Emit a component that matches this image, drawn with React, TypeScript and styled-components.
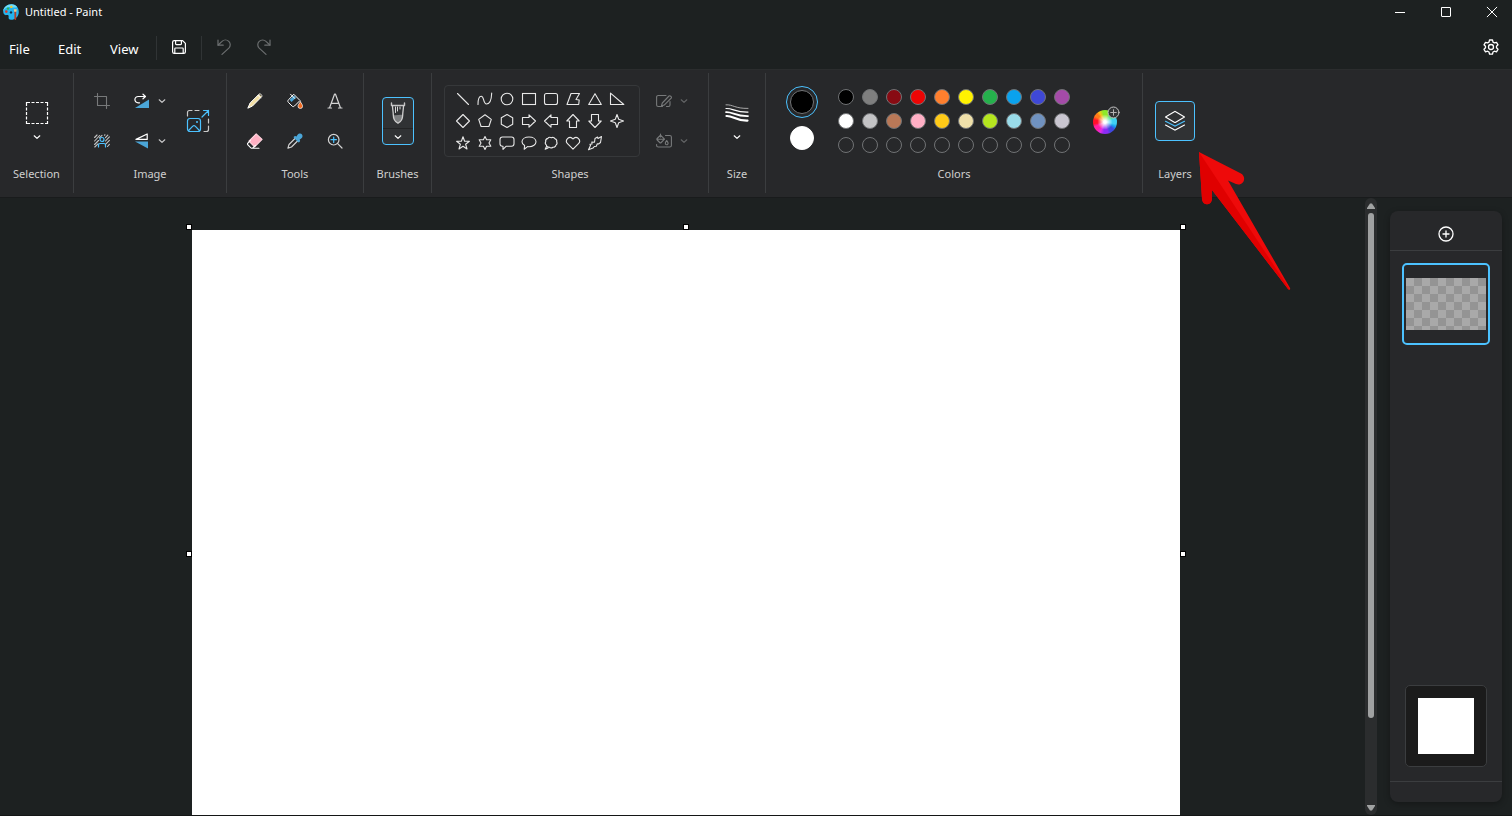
import React from "react";
import styled, { createGlobalStyle, css } from "styled-components";

const accent = "#4cc2ff";
const line = "#3b3d3f";

const GlobalStyle = createGlobalStyle`
  *, *::before, *::after { box-sizing: border-box; }
  html, body { margin: 0; padding: 0; background: #1d2121; }
  body, button { font-family: "Noto Sans", "Open Sans", sans-serif; }
  button { border: 0; padding: 0; margin: 0; background: transparent; color: inherit; cursor: pointer; }
  svg { display: block; flex: none; }
`;

const Window = styled.div`
  display: flex;
  flex-direction: column;
  height: 100vh;
  overflow: hidden;
  color: #ffffff;
  background: #1d2121;
`;

const TitleBar = styled.header`
  display: flex;
  align-items: center;
  justify-content: space-between;
  height: 24px;
  padding-left: 3px;
`;

const TitleText = styled.h1`
  display: flex;
  align-items: center;
  gap: 6px;
  margin: 0;
  font-size: 11px;
  line-height: 16px;
  font-weight: 400;
`;

const CaptionButtons = styled.div`
  display: flex;
  gap: 6px;
`;

const CaptionButton = styled.button`
  display: grid;
  place-items: center;
  width: 40px;
  height: 24px;
`;

const MenuBar = styled.nav`
  display: flex;
  align-items: center;
  height: 45px;
  padding: 2px 9px 0 0;
`;

const MenuItem = styled.button<{ $width: number }>`
  width: ${(p) => p.$width}px;
  height: 32px;
  padding: 2px 0 0 9px;
  text-align: left;
  font-size: 13px;
  line-height: 20px;
`;

const MenuRule = styled.span`
  width: 1px;
  height: 24px;
  background: #303435;
`;

const MenuIcon = styled.button<{ $width?: number }>`
  display: grid;
  place-items: center;
  width: ${(p) => p.$width ?? 40}px;
  height: 32px;
  padding-bottom: 2px;

  &:disabled { color: #6c6f70; }
`;

const Spacer = styled.span`
  flex: 1;
`;

const Ribbon = styled.section`
  display: flex;
  flex: none;
  padding: 4px 0;
  background: #27282a;
  box-shadow: 0 1px 0 #191b1c, inset 0 1px 0 #2b2d2e;
`;

const GroupBox = styled.section<{ $width: number; $last?: boolean }>`
  position: relative;
  display: flex;
  flex-direction: column;
  flex: none;
  align-items: center;
  width: ${(p) => p.$width}px;
  padding: 8px 0 11px;
  border-right: 1px solid ${(p) => (p.$last ? "transparent" : line)};
`;

const GroupBody = styled.div<{ $gap?: number; $indent?: number }>`
  display: flex;
  align-items: center;
  gap: ${(p) => p.$gap ?? 0}px;
  height: 80px;
  padding-left: ${(p) => p.$indent ?? 0}px;
`;

const GroupLabel = styled.h2`
  margin: 5px 0 0;
  font-size: 11px;
  line-height: 16px;
  font-weight: 400;
  color: #cfcfcf;
  white-space: nowrap;
`;

const ToolGrid = styled.div<{ $columns: string }>`
  display: grid;
  grid-template-columns: ${(p) => p.$columns};
  grid-auto-rows: 40px;
`;

const ToolButton = styled.button<{ $active?: boolean }>`
  display: grid;
  place-items: center;
  width: 40px;
  height: 40px;

  &:disabled { color: #77797a; }

  ${(p) =>
    p.$active &&
    css`
      border: 1px solid ${accent};
      border-radius: 4px;
      background: #303234;
    `}
`;

const SplitButton = styled.button`
  display: flex;
  align-items: center;
  gap: 8px;
  width: 56px;
  height: 40px;
  padding: 0 12px;

  svg:last-child { opacity: 0.75; }
  &:disabled { color: #77797a; }
`;

const StackButton = styled.button`
  display: flex;
  flex-direction: column;
  align-items: center;
  gap: 8px;
  width: 40px;
`;

const BrushButton = styled.div`
  display: flex;
  flex-direction: column;
  width: 32px;
  height: 48px;
  border: 1px solid ${accent};
  border-radius: 4px;
  background: #303234;
`;

const BrushPart = styled.button<{ $height: number }>`
  display: grid;
  place-items: center;
  height: ${(p) => p.$height}px;

  & + & { border-top: 1px solid #232425; }
`;

const ShapeGallery = styled.div`
  display: grid;
  grid-template-columns: repeat(8, 22px);
  grid-auto-rows: 22px;
  width: 196px;
  padding: 2px 7px;
  border: 1px solid #36383a;
  border-radius: 4px;
`;

const ShapeButton = styled.button`
  display: grid;
  place-items: center;
  color: #e8e8e8;
`;

const ActiveColors = styled.div`
  display: flex;
  flex-direction: column;
  gap: 4px;
  margin: 0 16px 2px 0;
`;

const ActiveColor = styled.button<{ $color: string; $selected?: boolean }>`
  display: grid;
  place-items: center;
  width: 32px;
  height: 32px;
  border: ${(p) => (p.$selected ? `1px solid ${accent}` : "0")};
  border-radius: 50%;

  &::after {
    content: "";
    width: 24px;
    height: 24px;
    border-radius: 50%;
    border: 1px solid ${(p) => (p.$selected ? "#737577" : "#ffffff")};
    background: ${(p) => p.$color};
  }
`;

const Palette = styled.div`
  display: grid;
  grid-template-columns: repeat(10, 24px);
  grid-auto-rows: 24px;
  margin-right: 12px;
`;

const Swatch = styled.button<{ $color: string }>`
  display: grid;
  place-items: center;

  &::after {
    content: "";
    width: 16px;
    height: 16px;
    border-radius: 50%;
    border: 1px solid #707274;
    background: ${(p) => p.$color};
  }
`;

const WheelButton = styled.button`
  position: relative;
  width: 40px;
  height: 40px;

  svg {
    position: absolute;
    top: 5px;
    right: 6px;
  }
`;

const Wheel = styled.span`
  display: block;
  width: 24px;
  height: 24px;
  margin: 2px 0 0 7px;
  border-radius: 50%;
  background:
    radial-gradient(circle, #ffffff 0 8%, rgba(255, 255, 255, 0) 45%),
    conic-gradient(
      #8ee82a 0deg 20deg, #3fe07a 40deg 55deg, #3fd0f5 75deg 100deg, #1a9bf0 115deg,
      #4048e0 130deg 150deg, #8a2cf5 165deg 185deg, #e02ce8 205deg, #ff1fa0 225deg 245deg,
      #ff1028 262deg 280deg, #ff7a1a 300deg 315deg, #f5c518 330deg, #8ee82a 350deg
    );
`;

const Pointer = styled.svg`
  position: absolute;
  left: 52px;
  top: 76px;
  z-index: 2;
  pointer-events: none;
`;

const Workspace = styled.main`
  display: flex;
  flex: 1;
  min-height: 0;
  padding-top: 1px;
  border-bottom: 1px solid #141616;
`;

const Viewport = styled.div`
  display: flex;
  flex: 1;
  justify-content: center;
  align-items: flex-start;
  min-width: 0;
  padding: 29px 0 0 7px;
  overflow: hidden;
`;

const Frame = styled.div`
  position: relative;
  flex: none;
  padding: 3px;
`;

const Paper = styled.div`
  width: 988px;
  height: 648px;
  background: #ffffff;
`;

const Handle = styled.span<{ $x: number; $y: number }>`
  position: absolute;
  left: ${(p) => p.$x}%;
  top: ${(p) => p.$y}%;
  width: 6px;
  height: 6px;
  margin: -3px 0 0 -3px;
  border: 1px solid #000000;
  background: #ffffff;
`;

const ScrollBar = styled.div`
  display: flex;
  flex-direction: column;
  width: 12px;
  border-radius: 6px;
  background: #2b2d2e;
`;

const ScrollArrow = styled.button`
  display: grid;
  place-items: center;
  height: 15px;
  color: #a0a2a2;
`;

const ScrollTrack = styled.div`
  flex: 1;
  padding: 0 3px;
`;

const ScrollThumb = styled.div`
  height: 86%;
  border-radius: 3px;
  background: #9fa1a1;
`;

const LayerPanel = styled.aside`
  display: flex;
  flex-direction: column;
  align-items: center;
  width: 112px;
  margin: 13px 10px 13px 13px;
  border-radius: 8px;
  background: #27282a;
  box-shadow: 0 2px 6px rgba(0, 0, 0, 0.3);
`;

const LayerHeader = styled.div`
  display: grid;
  place-items: center;
  width: 100%;
  height: 40px;
  padding-top: 7px;
  border-bottom: 1px solid ${line};
`;

const LayerCard = styled.button`
  display: grid;
  place-items: center;
  width: 88px;
  height: 82px;
  margin-top: 12px;
  border: 2px solid ${accent};
  border-radius: 5px;
`;

const Checker = styled.span`
  width: 80px;
  height: 52px;
  background: repeating-conic-gradient(#949494 0 25%, #a9a9a9 0 50%) 0 0 / 16px 16px;
`;

const BackgroundCard = styled.button`
  display: grid;
  place-items: center;
  width: 82px;
  height: 82px;
  margin: auto 0 14px;
  border: 1px solid ${line};
  border-radius: 5px;
  background: #1b1b1b;
`;

const BackgroundFill = styled.span`
  width: 56px;
  height: 56px;
  background: #ffffff;
`;

const LayerFooter = styled.div`
  width: 100%;
  height: 21px;
  border-top: 1px solid ${line};
`;

type IconProps = { size?: number; box?: number; width?: number; children: React.ReactNode };

const Icon = ({ size = 16, box = 16, width = 1, children }: IconProps) => (
  <svg
    width={size}
    height={size}
    viewBox={`0 0 ${box} ${box}`}
    fill="none"
    stroke="currentColor"
    strokeWidth={width}
    strokeLinecap="round"
    strokeLinejoin="round"
    aria-hidden="true"
  >
    {children}
  </svg>
);

const Chevron = () => (
  <Icon size={8} box={8} width={1.2}>
    <path d="M1.2 2.8 4 5.4 6.8 2.8" />
  </Icon>
);

const PaintLogo = () => (
  <Icon>
    <path
      d="M8.6.3C4 .3.2 3.6.2 7.6c0 2.7 1.7 3.9 3.4 3.5 1.5-.4 2.300.3 2 1.700-.4 1.700.6 3 2.400 3 4.300 0 7.800-3.400 7.800-7.800C15.800 3.500 12.700.3 8.600.3Z"
      fill="#25b4ee"
      stroke="none"
    />
    <path d="M8.6.3C4 .3.5 3.3.2 7.2 2 3.5 5 2.6 8.5 3.2c3 .5 5 .2 5.6-.3C12.7 1.2 10.8.3 8.6.3Z" fill="#6fdcf7" stroke="none" />
    <circle cx="3.3" cy="7.6" r="1.3" fill="#d93b2b" stroke="none" />
    <circle cx="5" cy="4.6" r="1.2" fill="#35b44a" stroke="none" />
    <circle cx="8.3" cy="2.9" r="1.2" fill="#f2c72e" stroke="none" />
    <circle cx="8" cy="8.4" r="1.2" fill="#10334d" stroke="none" />
    <path d="M12.3 8v7" stroke="#b5402b" strokeWidth="1.8" />
    <path d="M10.8 5.2h3l-.4 2.600h-2.200Z" fill="#f0c987" stroke="none" />
  </Icon>
);

const SaveIcon = () => (
  <Icon width={1.2}>
    <path d="M1.6 3.2c0-.9.7-1.6 1.6-1.6h8.4l2.8 2.8v8.4c0 .9-.7 1.6-1.6 1.6H3.2c-.9 0-1.6-.7-1.6-1.6Z" />
    <path d="M4.6 1.800v3c0 .5.3.8.8.8h4.200c.5 0 .8-.3.8-.8v-3M3.800 14.200V9.800c0-.5.3-.8.8-.8h6.800c.5 0 .8.3.8.8v4.400" />
  </Icon>
);

const UndoIcon = () => (
  <Icon width={1.2}>
    <path d="M2 1v5.200h5.200" />
    <path d="M2.200 6 6 2.400c1.900-1.900 4.900-1.900 6.800 0s1.900 4.800 0 6.700L6 15.400" />
  </Icon>
);

const RedoIcon = () => (
  <Icon width={1.2}>
    <path d="M14 1v5.200H8.800" />
    <path d="M13.800 6 10 2.400c-1.900-1.900-4.900-1.900-6.800 0s-1.900 4.800 0 6.700l6.800 6.300" />
  </Icon>
);

const GearIcon = () => (
  <Icon width={1.3}>
    <path d="M6.500 1h3l.5 2.100 1.400.8 2.100-.6L15 5.800l-1.500 1.500v1.500L15 10.300l-1.500 2.500-2.100-.6-1.400.8-.5 2.100h-3L6 13l-1.400-.8-2.100.6L1 10.300l1.500-1.500V7.300L1 5.800l1.500-2.500 2.100.6L6 3.100Z" />
    <circle cx="8" cy="8" r="2.5" />
  </Icon>
);

const SelectIcon = () => (
  <Icon size={24} box={24}>
    <g strokeLinecap="butt" strokeWidth="1.2">
      <path d="M1 1.500h4m1.500 0h3m1.500 0h3m1.500 0h3m1.500 0h3M1 22.500h4m1.500 0h3m1.500 0h3m1.500 0h3m1.500 0h3" />
      <path d="M1.500 1v4m0 1.500v3m0 1.500v3m0 1.500v3m0 1.500v3M22.500 1v4m0 1.500v3m0 1.500v3m0 1.500v3m0 1.500v3" />
    </g>
  </Icon>
);

const CropIcon = () => (
  <Icon width={1.1}>
    <path d="M3.500.5v12h12M.5 3.500h12v12" />
  </Icon>
);

const RemoveBackgroundIcon = () => (
  <Icon>
    <path
      d="M.6 4.500 3 2M.6 8 5.600 2.500M.6 11.500 4.500 7.500M.8 14 4 10.800M5.500 4.800 8 2.300M10.500 2.200l.5-.4M11.500 4.700l2.300-2.500M11.500 8 15.400 3.800M11.500 11.300l3.900-4M13.500 13.500l1.900-2.200"
      stroke="#c4c4c4"
      strokeWidth="1.1"
    />
    <circle cx="8" cy="6.5" r="2" stroke={accent} strokeWidth="1.2" />
    <path d="M4.500 14v-2c0-1 .6-1.500 1.500-1.500h4c.9 0 1.500.5 1.500 1.500v2" stroke={accent} strokeWidth="1.2" />
  </Icon>
);

const RotateIcon = () => (
  <Icon width={1.2}>
    <path d="M5.500 9.800H4.200C2.300 9.800.9 8.300.9 6.600s1.400-3.100 3.300-3.100h7.300M9 1.200l2.500 2.300L9 5.800" />
    <path d="M15 6.500V15H1Z" fill="#4ba6d8" stroke="none" />
  </Icon>
);

const FlipIcon = () => (
  <Icon width={1.2}>
    <path d="M13.200 1v5.400H2Z" />
    <path d="M1 8.500h13v7Z" fill="#4ba6d8" stroke="none" />
  </Icon>
);

const ResizeIcon = () => (
  <Icon size={24} box={24} width={1.2}>
    <path d="M1.500 7V3.500c0-1.200.6-2 2-2H6M9 1.500h4M22.500 10v4M22.500 17v3.500c0 1.200-.8 2-2 2H18" stroke="#c9c9c9" />
    <rect x="1.5" y="9.5" width="13" height="13" rx="2.5" stroke={accent} />
    <path d="m2.600 21.500 4.200-4.300c.7-.7 1.700-.7 2.400 0l4.200 4.300M16 8l6.500-6.500M17.500 1.500h5v5" stroke={accent} />
    <circle cx="11" cy="13" r="1" fill={accent} stroke="none" />
  </Icon>
);

const PencilIcon = () => (
  <Icon>
    <path d="M12 1.200c1.200-1.200 3.800 1.200 2.600 2.600L5.500 13 .8 15.200 3 10.300Z" fill="#f3e0a5" />
    <path d="m11 2.300 2.600 2.600" />
    <path d="M12.300 1.400c1-.7 2.900 1.200 2.100 2.200Z" fill="#27282a" stroke="none" />
  </Icon>
);

const FillIcon = () => (
  <Icon>
    <path d="m7 1.500 6 6-5.500 5.500c-.8.8-1.700.8-2.500 0L1.400 9.400c-.8-.8-.8-1.700 0-2.500Z" />
    <path d="m2.500 6.800 4.500-4.300 2 2L4.600 9Z" fill="#4ba6d8" stroke="none" />
    <path d="m3.500 1.200 4.300 4.300" />
    <path d="M13.400 8.800c1.200 1.800 2.200 3.200 2.200 4.400a2.300 2.300 0 0 1-4.600 0c0-1.200 1.200-2.600 2.400-4.400Z" fill="#f26b21" strokeWidth=".7" />
  </Icon>
);

const TextIcon = () => (
  <Icon width={1.2}>
    <path d="M2.500 15 7.500 1.200h1L13.500 15M4.200 10.300h7.600M1 15h3.500M11.500 15H15" stroke="#d4d4d4" />
  </Icon>
);

const EraserIcon = () => (
  <Icon width={1.1}>
    <path d="m9.200.9 5.900 5.400-7.500 7.500-5.700-5.600Z" fill="#ffb0c3" stroke="#ffd5de" />
    <path d="M3.300 7.700.9 10.200c-.5.5-.5 1.200 0 1.700l2.700 2.700c.4.4 1 .7 1.600.7H12M5.500 15.200l3-2.800" />
  </Icon>
);

const DropperIcon = () => (
  <Icon width={1.1}>
    <path d="m8 5.500-6 6L.9 15.100 4.500 14l6-6" stroke="#d4d4d4" />
    <path d="M7 3.500c1-1 1.800-.6 2.500-.1.7-1.300 1.800-2.700 3-2.900 2.100-.3 3.300 1.300 3 3-.2 1.200-1.600 2.300-2.900 3 .5.7.9 1.500-.1 2.500-.5.5-1 .5-1.500 0L7 5c-.5-.5-.5-1 0-1.500Z" fill="#4ba6d8" stroke="none" />
  </Icon>
);

const ZoomIcon = () => (
  <Icon width={1.2}>
    <circle cx="6.7" cy="6.7" r="5.3" stroke="#d4d4d4" />
    <path d="m10.700 10.700 4.300 4.300" stroke="#d4d4d4" />
    <path d="M6.700 4v5.400M4 6.700h5.400" stroke={accent} />
  </Icon>
);

const BrushIcon = () => (
  <Icon size={24} box={24}>
    <path d="M7.500 14c3 1.200 6-1 9 0 0 3.500-2.500 7-4.500 8.300-2-1.300-4.500-4.800-4.500-8.300Z" fill="#7d7f80" stroke="none" />
    <path d="M5.500 2v2.500h13V2" stroke="#c4c4c4" strokeWidth="1.4" />
    <path d="M6.500 5c0 3 .8 6 .8 9 0 4 2.700 7.200 4.700 8.300 2-1.100 4.700-4.300 4.700-8.300 0-3 .8-6 .8-9" stroke="#cfcfcf" strokeWidth="1.3" />
    <path d="M9.500 6v5.500M11.500 6v4M14 6v2" stroke="#d8d8d8" />
  </Icon>
);

const OutlineIcon = () => (
  <Icon width={1.1}>
    <path d="M10 2.500H2.300C1.300 2.500.6 3.100.6 4v8c0 .9.7 1.500 1.700 1.500h4.200M14 8.500v3.500c0 .9-.6 1.500-1.500 1.500h-2" />
    <path d="M13 3c.9-.9 3.100.9 2.200 2.100l-7 7L5.500 13l.8-3Z" />
  </Icon>
);

const ShapeFillIcon = () => (
  <Icon width={1.1}>
    <path d="M9.500 2.500h4.200c1 0 1.700.6 1.700 1.500v8.500c0 .9-.7 1.500-1.700 1.500H2.300c-1 0-1.700-.6-1.700-1.500v-1" />
    <path d="m4.500 2.200 4 4-3.300 3.300c-.5.5-1 .5-1.500 0L1.200 7c-.5-.5-.5-1 0-1.500ZM4.500 1v3M1 6.200h7.500" />
    <path d="M10.700 7.500c.8 1.200 1.400 2 1.400 2.800a1.400 1.400 0 0 1-2.800 0c0-.8.6-1.600 1.400-2.800Z" />
  </Icon>
);

const SizeIcon = () => (
  <Icon size={24} box={24}>
    <path d="M1 3.800c7-.4 9 3.900 22 3.600" strokeWidth=".9" stroke="#b5b5b5" />
    <path d="M1 7.500c7-.4 9 3.900 22 3.600" strokeWidth="1.2" />
    <path d="M1 11.100c7-.4 9 4.300 22 4" strokeWidth="1.7" />
    <path d="M1.500 15c7-.4 8.500 4.900 21 4.600" strokeWidth="2.2" />
  </Icon>
);

const LayersIcon = () => (
  <Icon size={24} box={24} width={1.1}>
    <path d="M11.300 2.700c.4-.3 1-.3 1.400 0L21.500 8l-8.800 5.200c-.4.3-1 .3-1.400 0L2.500 8Z" />
    <path d="m2.500 12.200 8.800 4.600c.4.3 1 .3 1.400 0l8.800-4.600" stroke={accent} />
    <path d="m2.500 16 8.800 4.800c.4.3 1 .3 1.400 0l8.800-4.800" />
  </Icon>
);

const shapes: [string, React.ReactNode][] = [
  ["Line", <path d="m2.500 2.500 11 11" />],
  ["Curve", <path d="M1 13.500C1 9 2.200 5.300 4.200 5.300c3.100 0 1.800 7.700 5.300 7.700C12.800 13 14.500 8 14.700 2" />],
  ["Oval", <circle cx="8" cy="8" r="5.8" />],
  ["Rectangle", <rect x="1.5" y="2.5" width="13" height="11" strokeLinejoin="miter" />],
  ["Rounded rectangle", <rect x="1.5" y="2.5" width="13" height="11" rx="2" />],
  ["Polygon", <path d="M6 2.500h8.500L11 8.500l3.200.5-.5 4.500H2Z" />],
  ["Triangle", <path d="m8 2.700 6.300 10.800H1.700Z" />],
  ["Right triangle", <path d="M1.500 2.200v11.300h13.300Z" />],
  ["Diamond", <path d="M8 1.500 14.500 8 8 14.500 1.500 8Z" />],
  ["Pentagon", <path d="m8 1.800 6.300 4.600-2.400 7.100H4.100L1.700 6.400Z" />],
  ["Hexagon", <path d="m8 1.500 5.700 3.200v6.600L8 14.500l-5.700-3.200V4.700Z" />],
  ["Right arrow", <path d="M1.500 4.500H8V1.800L14.500 8 8 14.200v-2.700H1.500Z" />],
  ["Left arrow", <path d="M14.500 4.500H8V1.800L1.500 8 8 14.200v-2.700h6.500Z" />],
  ["Up arrow", <path d="M4.500 14.500V8H1.800L8 1.500 14.200 8h-2.700v6.500Z" />],
  ["Down arrow", <path d="M4.500 1.500V8H1.800L8 14.500 14.200 8h-2.700V1.500Z" />],
  ["Four-point star", <path d="m8 1.500 1.700 4.800L14.500 8 9.700 9.700 8 14.500 6.300 9.700 1.500 8l4.800-1.700Z" />],
  ["Five-point star", <path d="m8 1.700 1.600 4.600h4.800l-3.800 2.900 1.400 4.800L8 11.200 4 14l1.400-4.800-3.800-2.900h4.800Z" />],
  ["Six-point star", <path d="m8 1.500 1.600 3.300h4.200L12 8l1.800 3.200H9.600L8 14.500l-1.600-3.300H2.200L4 8 2.200 4.800h4.200Z" />],
  ["Rounded callout", <path d="M3.500 2h9C14 2 15 3 15 4.500v4.300c0 1.500-1 2.500-2.500 2.500H7l-3 3v-3h-.5C2 11.300 1 10.300 1 8.800V4.500C1 3 2 2 3.500 2Z" />],
  ["Oval callout", <path d="M8 2c4 0 7 2 7 4.800s-3 4.900-7 4.900l-1.500-.1-3.300 2.600.4-3.600C2 9.700 1 8.300 1 6.800 1 4 4 2 8 2Z" />],
  ["Cloud callout", <path d="M4.800 3.400c.9-1.200 2.400-1.300 3.500-.7 1.400-.8 3-.2 3.700 1.100 1.400.5 2 1.800 1.700 3 .6 1.200.2 2.600-.8 3.300-.2 1.500-1.600 2.400-3 2.100-1.100.9-2.700.8-3.700-.1-1.300.2-2.600-.6-2.800-2-1-.8-1.400-2.200-.7-3.300-.3-1.500.6-3 2.100-3.400ZM3.500 11.500l-1.300 2.700 2.800-1.300" />],
  ["Heart", <path d="M8 14.200 2.500 8.700C-.7 5.500 4.500-.6 8 4c3.500-4.600 8.700 1.500 5.500 4.700Z" />],
  ["Lightning", <path d="m8 3.500 2.500-1.500.5 1.500 3.500-2-1 6-2 1.500-1.200-.3-1 2.600-2 .2-1.300 1.600-4.500 1.700 2-4.300-.5-1.300 2-.2L4.800 7l2.700.3Z" />],
];

const colors: [string, string][] = [
  ["Black", "#000000"], ["Gray", "#7f7f7f"], ["Dark red", "#880b13"], ["Red", "#ec0505"], ["Orange", "#ff7f2e"],
  ["Yellow", "#fff200"], ["Green", "#25b14c"], ["Turquoise", "#0aa2ee"], ["Indigo", "#3f48d6"], ["Purple", "#a44ba8"],
  ["White", "#ffffff"], ["Light gray", "#c3c3c5"], ["Brown", "#b97857"], ["Rose", "#ffafc5"], ["Gold", "#ffca18"],
  ["Light yellow", "#efe0aa"], ["Lime", "#b5e61f"], ["Light turquoise", "#99dbe9"], ["Blue-gray", "#7092c0"], ["Lavender", "#c9c6d0"],
];
const customSlots = Array.from({ length: 10 }, (_, i): [string, string] => [`Custom color ${i + 1}`, "transparent"]);

const handles = [[0, 0], [50, 0], [100, 0], [0, 50], [100, 50], [0, 100], [50, 100], [100, 100]];

type GroupProps = {
  label: string;
  width: number;
  gap?: number;
  indent?: number;
  last?: boolean;
  extra?: React.ReactNode;
  children: React.ReactNode;
};

const Group = ({ label, width, gap, indent, last, extra, children }: GroupProps) => (
  <GroupBox $width={width} $last={last} aria-label={label}>
    <GroupBody $gap={gap} $indent={indent}>{children}</GroupBody>
    <GroupLabel>{label}</GroupLabel>
    {extra}
  </GroupBox>
);

const RedPointer = () => (
  <Pointer width="100" height="150" viewBox="0 0 100 150" aria-hidden="true">
    <path d="M4 3 46 24.500c6.500 4 2 13-5 10.500L33 31.500 95 139c.8 1.500-1 2.500-2 1L17 41V50c-.5 7-9.500 7-10 0Z" fill="#ee0a0a" />
    <path d="M4 3 94.500 140c-.5.5-1 .5-1.500 0L17 41V50c-.5 7-9.500 7-10 0Z" fill="#e00000" />
  </Pointer>
);

export default function App() {
  return (
    <Window>
      <GlobalStyle />
      <TitleBar>
        <TitleText>
          <PaintLogo />
          Untitled - Paint
        </TitleText>
        <CaptionButtons>
          <CaptionButton aria-label="Minimize">
            <Icon size={12} box={12}><path d="M1 6.500h10" strokeLinecap="butt" /></Icon>
          </CaptionButton>
          <CaptionButton aria-label="Maximize">
            <Icon size={12} box={12}><rect x="1.5" y="1.5" width="9" height="9" rx=".5" /></Icon>
          </CaptionButton>
          <CaptionButton aria-label="Close">
            <Icon size={12} box={12}><path d="m1.200 1.200 9.600 9.600m0-9.600-9.600 9.600" /></Icon>
          </CaptionButton>
        </CaptionButtons>
      </TitleBar>

      <MenuBar>
        <MenuItem $width={49}>File</MenuItem>
        <MenuItem $width={52}>Edit</MenuItem>
        <MenuItem $width={55}>View</MenuItem>
        <MenuRule />
        <MenuIcon $width={44} aria-label="Save"><SaveIcon /></MenuIcon>
        <MenuRule />
        <MenuIcon $width={44} aria-label="Undo" disabled><UndoIcon /></MenuIcon>
        <MenuIcon $width={36} aria-label="Redo" disabled><RedoIcon /></MenuIcon>
        <Spacer />
        <MenuIcon $width={24} aria-label="Settings"><GearIcon /></MenuIcon>
      </MenuBar>

      <Ribbon>
        <Group label="Selection" width={74}>
          <StackButton aria-label="Selection tool"><SelectIcon /><Chevron /></StackButton>
        </Group>

        <Group label="Image" width={153}>
          <ToolGrid $columns="40px 56px">
            <ToolButton aria-label="Crop" disabled><CropIcon /></ToolButton>
            <SplitButton aria-label="Rotate"><RotateIcon /><Chevron /></SplitButton>
            <ToolButton aria-label="Remove background"><RemoveBackgroundIcon /></ToolButton>
            <SplitButton aria-label="Flip"><FlipIcon /><Chevron /></SplitButton>
          </ToolGrid>
          <ToolButton aria-label="Resize"><ResizeIcon /></ToolButton>
        </Group>

        <Group label="Tools" width={137}>
          <ToolGrid $columns="repeat(3, 40px)">
            <ToolButton aria-label="Pencil"><PencilIcon /></ToolButton>
            <ToolButton aria-label="Fill"><FillIcon /></ToolButton>
            <ToolButton aria-label="Text"><TextIcon /></ToolButton>
            <ToolButton aria-label="Eraser"><EraserIcon /></ToolButton>
            <ToolButton aria-label="Color picker"><DropperIcon /></ToolButton>
            <ToolButton aria-label="Magnifier"><ZoomIcon /></ToolButton>
          </ToolGrid>
        </Group>

        <Group label="Brushes" width={68}>
          <BrushButton>
            <BrushPart $height={31} aria-label="Brush"><BrushIcon /></BrushPart>
            <BrushPart $height={16} aria-label="Brush options"><Chevron /></BrushPart>
          </BrushButton>
        </Group>

        <Group label="Shapes" width={277} gap={4} indent={4}>
          <ShapeGallery>
            {shapes.map(([name, drawing]) => (
              <ShapeButton key={name} aria-label={name}><Icon width={1.1}>{drawing}</Icon></ShapeButton>
            ))}
          </ShapeGallery>
          <ToolGrid $columns="56px">
            <SplitButton aria-label="Shape outline" disabled><OutlineIcon /><Chevron /></SplitButton>
            <SplitButton aria-label="Shape fill" disabled><ShapeFillIcon /><Chevron /></SplitButton>
          </ToolGrid>
        </Group>

        <Group label="Size" width={57}>
          <StackButton aria-label="Size"><SizeIcon /><Chevron /></StackButton>
        </Group>

        <Group label="Colors" width={377} indent={4}>
          <ActiveColors>
            <ActiveColor $color="#000000" $selected aria-label="Color 1" />
            <ActiveColor $color="#ffffff" aria-label="Color 2" />
          </ActiveColors>
          <Palette>
            {[...colors, ...customSlots].map(([name, value]) => (
              <Swatch key={name} $color={value} aria-label={name} />
            ))}
          </Palette>
          <WheelButton aria-label="Edit colors">
            <Wheel />
            <Icon size={13} box={13}>
              <circle cx="6.5" cy="6.5" r="5.5" fill="#333537" stroke="#c6c6c6" />
              <path d="M6.500 3.700v5.600M3.700 6.500h5.600" stroke="#b4b4b4" />
            </Icon>
          </WheelButton>
        </Group>

        <Group label="Layers" width={65} last extra={<RedPointer />}>
          <ToolButton $active aria-label="Layers"><LayersIcon /></ToolButton>
        </Group>
      </Ribbon>

      <Workspace>
        <Viewport>
          <Frame>
            <Paper />
            {handles.map(([x, y]) => <Handle key={`${x}-${y}`} $x={x} $y={y} />)}
          </Frame>
        </Viewport>
        <ScrollBar>
          <ScrollArrow aria-label="Scroll up">
            <svg width="8" height="6" viewBox="0 0 8 6"><path d="M3 .5h2L8 5v1H0V5Z" fill="currentColor" /></svg>
          </ScrollArrow>
          <ScrollTrack><ScrollThumb /></ScrollTrack>
          <ScrollArrow aria-label="Scroll down">
            <svg width="8" height="6" viewBox="0 0 8 6"><path d="M3 5.500h2L8 1V0H0v1Z" fill="currentColor" /></svg>
          </ScrollArrow>
        </ScrollBar>
        <LayerPanel>
          <LayerHeader>
            <button aria-label="Add layer">
              <Icon width={1.3}><circle cx="8" cy="8" r="7" /><path d="M8 5v6M5 8h6" /></Icon>
            </button>
          </LayerHeader>
          <LayerCard aria-label="Layer 1"><Checker /></LayerCard>
          <BackgroundCard aria-label="Background layer"><BackgroundFill /></BackgroundCard>
          <LayerFooter />
        </LayerPanel>
      </Workspace>
    </Window>
  );
}
